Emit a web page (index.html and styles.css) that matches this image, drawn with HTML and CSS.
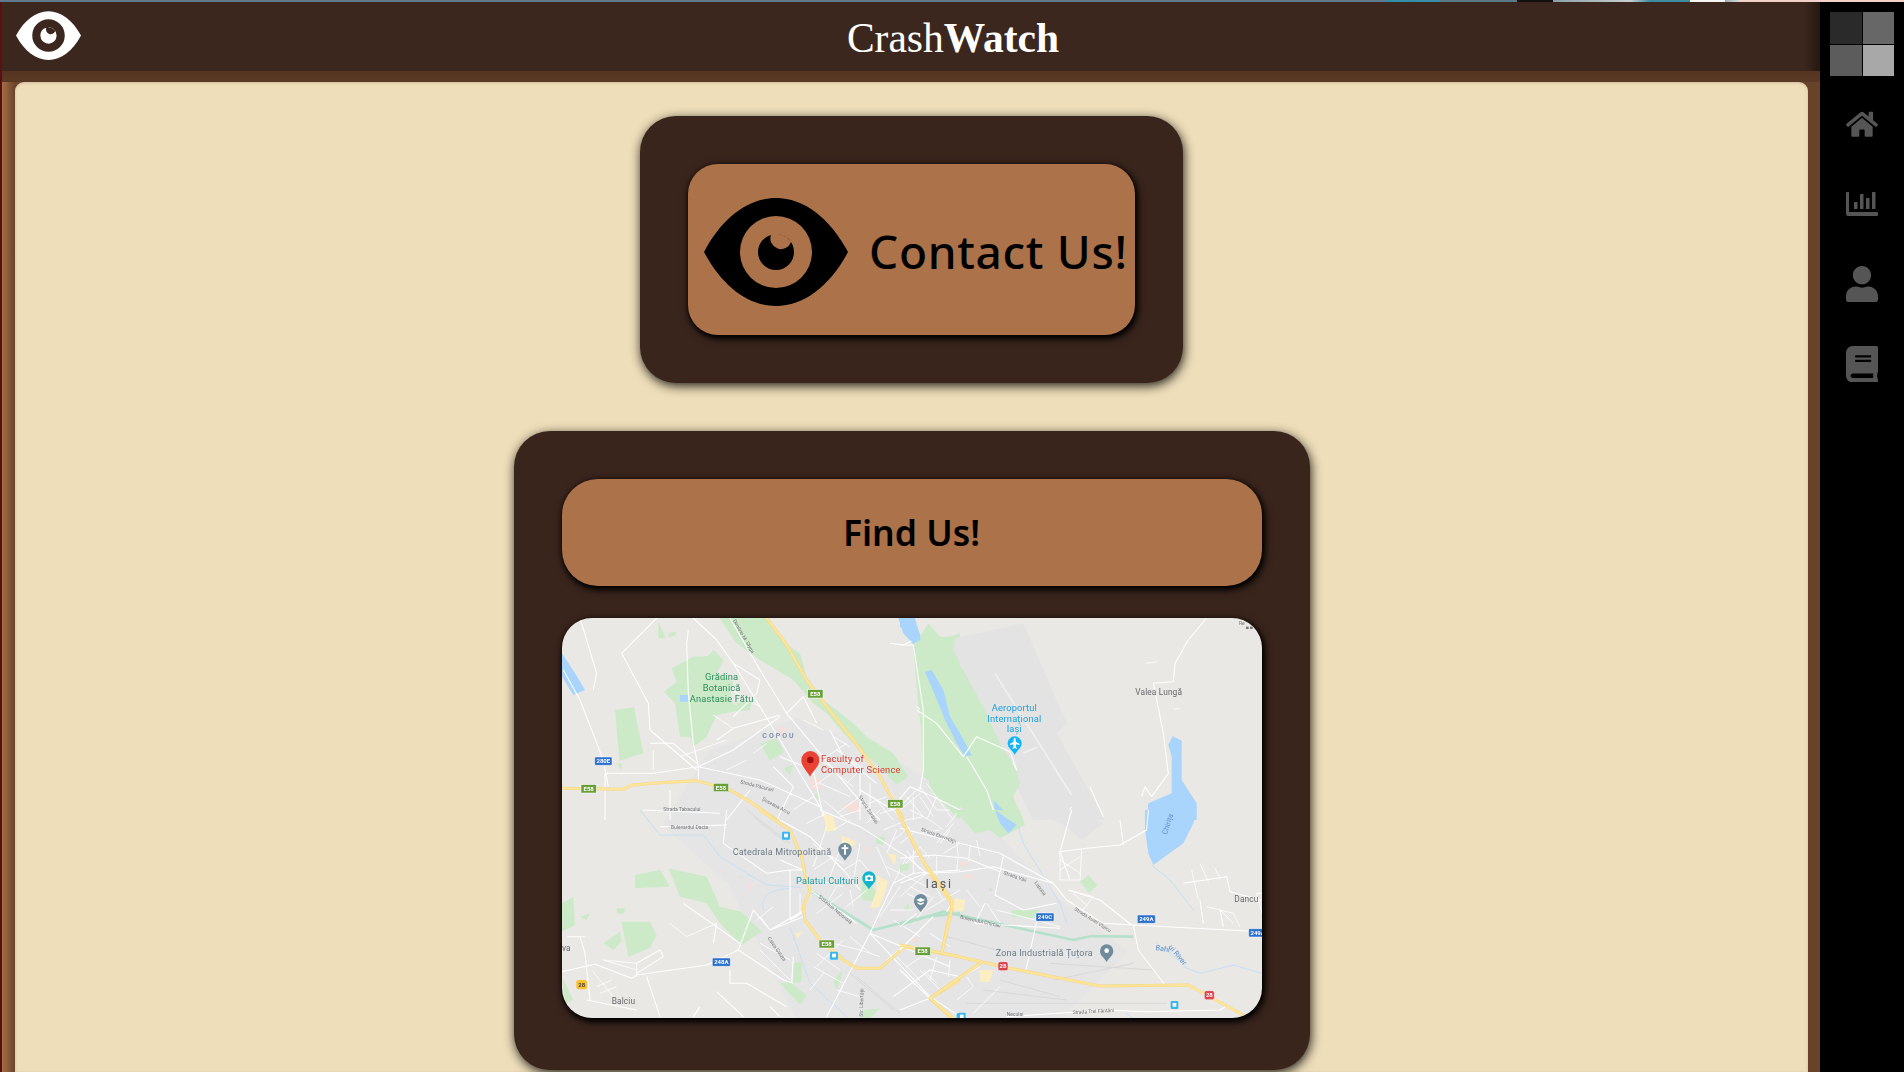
FILE: index.html
```html
<!DOCTYPE html>
<html lang="en">
<head>
<meta charset="utf-8">
<title>CrashWatch</title>
<link rel="stylesheet" href="styles.css">
</head>
<body>
<div class="strip"></div>
<div class="frame">
  <div class="redline"></div>
  <div class="page">
    <header class="topbar">
      <svg class="logo" viewBox="0 0 144 108"><use href="#eye"/></svg>
      <h1 class="brand">Crash<b>Watch</b></h1>
      <span></span>
    </header>
    <main class="main">
      <div class="panel">
        <section class="card card-contact">
          <a class="btn btn-contact">
            <svg class="btn-eye" viewBox="0 0 144 108"><use href="#eye"/></svg>
            <span>Contact Us!</span>
          </a>
        </section>
        <section class="card card-find">
          <a class="btn btn-find">Find Us!</a>
          <div class="map">
            <svg class="map-svg" viewBox="0 0 2100 1200" xmlns="http://www.w3.org/2000/svg">
              <rect class="land" width="2100" height="1200"/>
              <!-- city tint -->
              <path class="city" d="M440 400L700 300 1000 420 1300 640 1500 850 1700 1000 1500 1200 700 1200 500 800 300 620Z"/>
              <!-- top left crop -->
              <g transform="translate(-6,-24)">
                <path class="green" d="M335 175L400 140 445 138 460 120 490 150 470 190 520 215 510 270 545 300 470 315 440 380 400 410 390 380 360 380 345 280 312 245 350 215Z"/>
                <path class="green" d="M165 300L222 292 250 430 178 452Z"/>
                <path class="green" d="M295 35L318 85 295 85Z M325 70L350 65 345 78 325 80Z M170 460L185 460 185 480Z"/>
                <path class="green" d="M478 24L620 24 690 110 720 130 740 200 790 270 830 300 880 340 920 380 1000 430 1045 500 1010 525 960 470 900 420 850 370 800 310 760 280 700 210 600 150 530 100Z"/>
                <path class="green" d="M1060 110L1140 90 1200 70 1200 630 1110 540 1090 400 1075 290Z"/>
                <path class="green" d="M600 400L650 385 672 425 630 452Z M530 280L575 270 570 300 535 305Z M670 475L700 465 690 495Z M760 560L780 540 780 570Z"/>
                <path class="pinkish" d="M745 505L775 505 785 535 755 540Z M850 590L885 570 905 595 880 615Z M650 350L680 355 670 380Z"/>
                <path class="water" d="M6 130L45 190 75 240 40 255 6 200Z M1015 24L1060 24 1085 85 1060 103 1030 70Z M1095 180L1115 180 1130 240 1165 290 1170 330 1200 380 1200 400 1160 340 1120 270Z M360 255L385 255 385 275 360 275Z"/>
                <path class="road" d="M400 24L470 90 520 160 600 290 660 390 780 590 800 630M510 24L600 180 680 310 780 430 880 550 960 630M60 24L110 190 100 240M10 180L60 270 130 450 145 530M290 24L185 130 265 280 270 360 410 480M385 60L380 100 385 250 400 400 415 470M140 490L280 490 415 470 600 510 780 590M415 470L520 420 660 320M500 630L570 540M470 390L520 355 660 315M415 470L415 510M270 400L340 400 410 460M135 490L135 630M250 600L480 610M330 540L330 630M600 290L500 230M520 160L600 210 590 250 520 320M680 310L730 260 770 340M810 360L850 440 950 520M660 440L760 480 790 620M640 470L700 530 650 630M990 100L1030 105 1060 90M830 420L900 470 900 630M1000 590L1050 530 1120 560 1200 600M900 540L1000 600M1070 290L1150 350 1200 430"/>
                <path class="road thin" d="M750 430L830 480 760 530M780 520L870 560M790 570L860 630M930 520L930 630M960 500L1000 560M860 520L900 480M700 600L760 560M1060 560L1060 630M1100 520L1180 630M500 480L560 450M280 420L280 480M580 430L620 400M730 330L790 360M360 440L500 390M460 315L520 355M820 380L870 410M900 590L980 560M940 560L1000 630M1040 560L1090 620M800 440L860 400M840 500L880 530M830 610L900 560M1010 610L1080 550M1130 560L1100 630M960 610L1030 590"/>
                <path class="hwy-b" d="M6 535L190 538 215 525 300 518 410 512 510 540 570 575 650 630M620 24L680 105 740 210 800 290 880 390 960 500 1010 590 1030 630"/>
                <path class="hwy" d="M6 535L190 538 215 525 300 518 410 512 510 540 570 575 650 630M620 24L680 105 740 210 800 290 880 390 960 500 1010 590 1030 630"/>
              </g>
              <!-- top right crop -->
              <g transform="translate(1014,-24)">
                <path class="airport" d="M165 85L370 40 500 340 470 370 560 530 615 630 400 630 340 510 280 350 160 120Z"/>
                <path class="green" d="M40 110L85 40 120 80 165 80 155 120 190 180 250 290 300 400 345 470 360 520 340 560 370 630 230 630 120 540 70 500 60 300Z"/>
                <path class="runway" d="M285 190L515 555M370 430L410 412"/>
                <path class="water" d="M0 24L45 24 62 90 38 100 15 60 0 50Z M75 185L95 180 130 240 150 320 180 370 215 435 195 440 170 400 135 330 115 280Z M280 570L330 620 340 630 290 630Z M818 378L845 392 845 510 890 580 890 630 740 630 745 580 815 550 815 440 805 405Z"/>
                <path class="road" d="M920 24L865 90 825 160 820 215 760 220 790 370 805 490 755 560 735 530 725 560M50 300L110 340 190 440 230 380 330 425 350 480 340 460M40 105L70 300 70 480 60 540M200 440L260 540 290 630M570 530L610 620M515 590L490 630M40 105L0 105"/>
                <path class="road thin" d="M770 155L740 160M820 298L840 296M0 590L60 530 110 600 150 600M60 560L100 620M30 600L90 630"/>
              </g>
              <!-- bottom left crop -->
              <g transform="translate(-6,576)">
                <path class="green" d="M225 195L300 180 330 230 225 235Z"/>
                <path class="green" d="M325 175L440 200 480 290 545 305 605 365 545 405 480 340 440 280 360 260Z"/>
                <path class="green" d="M185 335L270 335 290 375 270 415 205 440 195 390Z M130 400L180 365 185 395 160 420Z M6 280L40 260 45 345 6 365Z M170 295L195 295 190 312 170 310Z M6 500L40 570 15 580Z M60 320L90 310 80 330Z M700 460L725 455 725 515 700 520Z M660 520L690 515 740 555 720 585Z M910 600L960 595 930 625 905 625Z M905 195L945 240 960 275 905 270Z M820 510L850 480 830 545Z M950 80L975 80 970 105 948 100Z M1030 300L1045 280 1050 300Z"/>
                <path class="sand" d="M790 10L820 20 830 60 800 65Z M840 75L890 95 860 130Z M980 130L1010 135 1005 165Z M950 195L985 215 960 290 930 295 950 240Z M705 370L725 365 715 385Z"/>
                <path class="pinkish" d="M915 110L930 110 925 140Z M560 225L580 220 570 250Z M1060 390L1075 380 1070 400Z"/>
                <path class="canal-blue" d="M240 0L300 75 430 75 480 140 620 225 720 232M610 300C600 250 640 240 690 235M690 350L750 520 860 620M545 195L545 205M565 195L585 205"/>
                <path class="canal" d="M745 238L940 360 1100 320 1200 310"/>
                <path class="rail" d="M560 0L690 100M580 20L680 100M870 490L1000 600M890 500L1020 610"/>
                <path class="road" d="M6 485L105 463 215 505 230 495 440 465 535 420 670 510 700 520M500 0L490 100 620 190 690 180 730 180M690 180L690 330 725 310M535 420L580 300 630 360 725 305M730 320L630 360M540 400L370 280M470 340L460 400M630 360L600 320M695 520L700 440M930 370L800 620M930 370L1110 560 1200 620M930 370L1000 220 1060 190 1200 180M930 370L1170 470M750 240L890 340M780 0L900 50 1040 140 1100 190M660 30L750 80 850 180 900 240M500 45L300 50M230 460L300 420 310 440 230 490M80 570L230 600M60 380L75 430 90 570M260 500L300 620M510 480L510 520 560 520 680 590M470 545L550 620M400 620L420 590M630 590L660 620M660 150L730 180M1000 560L1110 480 1200 500"/>
                <path class="road thin" d="M800 50L760 170M850 90L810 200M900 100L880 210M950 110L990 200M1010 60L980 130M1040 140L1000 220M1100 190L1020 260M1060 190L1060 120M980 170L1100 230M780 120L850 160M760 180L820 140M850 180L900 150M870 240L880 290M780 260L880 330M770 310L850 250M760 470L850 520M790 490L750 540M770 430L840 480M850 390L770 470M590 330L640 290M720 250L720 310M600 400L690 450M600 420L690 510M20 380L75 380M130 450L230 480M230 460L230 500M95 480L160 560M110 530L155 510M120 550L170 530M230 460L130 450M330 340L380 380 470 340M980 450L1050 390M1010 440L1080 510M1090 480L1130 520M1100 300L1200 240M1120 220L1160 260M740 40L800 10M840 20L900 0M920 40L960 0M970 60L1040 30M1050 60L1000 0M1080 70L1140 60M1130 100L1180 40M1150 130L1200 100M820 60L870 30M760 100L790 130M900 150L940 200M1000 90L1050 50M1030 170L1080 110M770 210L850 230M800 280L830 230M860 290L920 240M960 320L1020 230M1040 250L1100 280M1120 260L1060 340M990 300L1060 300M820 400L900 420M900 420L960 440M870 380L930 430M1000 330L1080 380M1110 370L1170 410M830 540L900 560M1040 470L1100 430M1130 440L1110 510"/>
                <path class="hwy-b" d="M600 0L690 60 725 140 735 195 750 240 730 290 735 330 780 390 850 450 890 475 960 475 1035 410 1200 440M1010 0L1060 100 1110 190 1175 280 1145 430M1200 510L1110 565 1175 625"/>
                <path class="hwy" d="M600 0L690 60 725 140 735 195 750 240 730 290 735 330 780 390 850 450 890 475 960 475 1035 410 1200 440M1010 0L1060 100 1110 190 1175 280 1145 430M1200 510L1110 565 1175 625"/>
              </g>
              <!-- bottom right crop -->
              <g transform="translate(1014,576)">
                <path class="airport" d="M400 0L520 0 610 40 545 90 500 50Z"/>
                <path class="green" d="M165 0L360 0 375 45 300 85 270 60 225 70Z M335 300L420 300 400 325 335 320Z M540 215L565 195 592 225 568 250Z M0 165L30 160 25 180 0 185Z M265 230L280 240 270 245Z"/>
                <path class="water" d="M735 0L890 0 880 40 850 100 760 165 745 130 735 60Z M285 0L350 45 325 70 300 40Z"/>
                <path class="canal-blue" d="M355 50L370 100 480 280 500 340M755 165L810 210 880 300M850 470L900 490 1000 465 1086 490M680 610L700 625M770 400L860 470"/>
                <path class="canal" d="M0 345L130 305 520 390 575 378 700 380"/>
                <path class="rail" d="M140 380L290 420M450 460L760 480M200 580L800 580M250 540L500 570M300 510L480 560M460 510L700 460"/>
                <path class="sand" d="M165 265L195 270 190 305 160 300Z M238 480L280 480 270 515 240 515Z"/>
                <path class="pinkish" d="M175 155L205 155 190 175Z M185 195L220 195 215 210Z M35 385L55 380 45 400Z"/>
                <path class="road" d="M0 55L60 70 180 100 300 130 460 220 500 270 610 340 700 345 1086 365M0 220L80 190 180 185 280 170 460 220M0 145L100 135 200 145 300 185M310 140L285 255 370 300 470 280M700 345L715 420 795 525M410 335L378 480M695 345L600 270 505 240M670 105L660 30M480 125L560 115 660 105 740 60 745 0M515 0L480 125 510 210M850 220L980 200 990 245 1086 270M900 270L910 340M960 300L970 350M1070 250L1086 250M320 620L620 600 740 605 960 600 985 585M100 320L0 420M255 280L225 340 480 355M140 305L155 280M0 480L90 565 0 600M0 350L50 310"/>
                <path class="road thin" d="M480 125L480 210 540 210 545 120M480 150L540 190M480 180L540 140M505 240L580 260 540 310M520 250L565 290M875 180L895 270M900 160L925 215M945 175L960 205M920 290L1000 310 1020 350M960 300L1000 340M1070 250L1086 310M290 300L480 350M260 280L300 340M170 100L175 140 170 180M210 110L205 155M40 70L0 100M110 140L110 195M20 120L60 180M60 480L120 540M170 570L220 530 200 500M150 520L240 470M150 450L145 500M220 610L300 530M20 30L70 20M90 30L130 60M140 50L170 10M230 90L240 140M120 100L150 60M30 230L90 260M100 220L130 270M200 240L240 290M60 110L90 145"/>
                <path class="hwy-b" d="M0 405L130 430 330 475 600 528 865 525 920 555 1030 615M155 270L155 300 125 430M240 460L90 565 160 625M0 20L70 155 155 270"/>
                <path class="hwy" d="M0 405L130 430 330 475 600 528 865 525 920 555 1030 615M155 270L155 300 125 430M240 460L90 565 160 625M0 20L70 155 155 270"/>
              </g>

              <!-- labels: top left -->
              <g transform="translate(-6,-24)">
                <text class="l-green" x="485" y="210">Grădina</text>
                <text class="l-green" x="485" y="243">Botanică</text>
                <text class="l-green" x="485" y="275">Anastasie Fătu</text>
                <text class="l-area" x="657" y="384">COPOU</text>
                <text class="l-red" x="783" y="455">Faculty of</text>
                <text class="l-red" x="783" y="488">Computer Science</text>
                <text class="l-st" x="310" y="602">Strada Tabacului</text>
                <text class="l-st" transform="translate(540,520) rotate(14)">Strada Păcurari</text>
                <text class="l-st" transform="translate(605,570) rotate(28)">Șoseaua Arcu</text>
                <text class="l-st" transform="translate(518,32) rotate(60)">Dimitrie M. Sfyga</text>
                <text class="l-st" transform="translate(895,560) rotate(58)">Strada Sărăriei</text>
                <path class="pin-red" d="M750 500C738 478 724 470 724 450A26 26 0 0 1 778 450C778 470 762 478 750 500Z"/>
                <circle class="pin-dot" cx="751" cy="450" r="10"/>
                <g class="sh-green"><rect x="743" y="239" width="46" height="25"/><text x="766" y="258">E58</text></g>
                <g class="sh-green"><rect x="63" y="524" width="46" height="25"/><text x="86" y="543">E58</text></g>
                <g class="sh-green"><rect x="460" y="520" width="46" height="25"/><text x="483" y="539">E58</text></g>
                <g class="sh-green"><rect x="983" y="569" width="46" height="25"/><text x="1006" y="588">E58</text></g>
                <g class="sh-blue"><rect x="104" y="441" width="52" height="25" rx="3"/><text x="130" y="460">280E</text></g>
              </g>
              <!-- labels: top right -->
              <g transform="translate(1014,-24)">
                <text class="l-sky" x="343" y="303">Aeroportul</text>
                <text class="l-sky" x="343" y="335">Internațional</text>
                <text class="l-sky" x="343" y="367">Iași</text>
                <path class="pin-sky" d="M344 434C335 418 323 414 323 400A21 21 0 0 1 365 400C365 414 353 418 344 434Z"/>
                <path class="plane" d="M342 384H346L348 396 358 401V405L348 403 347 411 351 414V416L344 414 337 416V414L341 411 340 403 330 405V401L340 396Z"/>
                <text class="l-town mid" x="776" y="254">Valea Lungă</text>
                <text class="l-st" x="1017" y="46">Re</text>
                <rect class="dots" x="1038" y="50" width="8" height="7"/><rect class="dots" x="1050" y="50" width="8" height="7"/>
              </g>
              <!-- labels: bottom left -->
              <g transform="translate(-6,576)">
                <text class="l-st" x="333" y="58">Bulevardul Dacia</text>
                <text class="l-st" transform="translate(622,385) rotate(55)">Calea Galata</text>
                <text class="l-st" transform="translate(775,262) rotate(40)">Șoseaua Națională</text>
                <text class="l-st" transform="translate(908,620) rotate(-88)">Str. Libertății</text>
                <text class="l-poi" x="518" y="135">Catedrala Mitropolitană</text>
                <path class="pin-gray" d="M855 152C846 138 835 132 835 118A20 20 0 0 1 875 118C875 132 864 138 855 152Z"/>
                <path class="pin-glyph" d="M852 104H858V112H865V117H858V134H852V117H845V112H852Z"/>
                <text class="l-teal" x="802" y="221">Palatul Culturii</text>
                <path class="pin-teal" d="M927 238C917 222 907 218 907 204A20 20 0 0 1 947 204C947 218 937 222 927 238Z"/>
                <path class="pin-glyph" d="M915 197H922L924 194H930L932 197H939V213H915Z"/>
                <circle class="pin-teal" cx="927" cy="205" r="5"/>
                <text class="l-city" x="1138" y="235">Iași</text>
                <path class="pin-gray" d="M1082 306C1073 292 1062 286 1062 272A20 20 0 0 1 1102 272C1102 286 1091 292 1082 306Z"/>
                <path class="pin-glyph" d="M1068 270L1082 264 1096 270 1082 276ZM1073 276L1082 280 1091 276V281L1082 285 1073 281Z"/>
                <text class="l-town" x="155" y="582">Balciu</text>
                <text class="l-town" x="6" y="422">va</text>
                <g class="sh-green"><rect x="777" y="390" width="46" height="24"/><text x="800" y="408">E58</text></g>
                <g class="sh-green"><rect x="1065" y="410" width="46" height="25"/><text x="1088" y="429">E58</text></g>
                <g class="sh-blue"><rect x="457" y="444" width="54" height="25" rx="3"/><text x="484" y="463">248A</text></g>
                <g class="sh-yellow"><rect x="49" y="510" width="32" height="28" rx="7"/><text x="65" y="531">28</text></g>
                <g class="sh-transit"><rect x="666" y="65" width="24" height="24" rx="3"/><rect class="ti" x="672" y="71" width="12" height="11"/></g>
                <g class="sh-transit"><rect x="810" y="425" width="24" height="24" rx="3"/><rect class="ti" x="816" y="431" width="12" height="11"/></g>
                <g class="sh-transit"><rect x="1190" y="610" width="24" height="24" rx="3"/></g>
              </g>
              <!-- labels: bottom right -->
              <g transform="translate(1014,576)">
                <text class="l-st" transform="translate(62,62) rotate(20)">Strada Eternității</text>
                <text class="l-st" transform="translate(310,192) rotate(20)">Strada Văii</text>
                <text class="l-st" transform="translate(403,218) rotate(55)">Lupului</text>
                <text class="l-st" transform="translate(522,300) rotate(32)">Strada Aurel Vlaicu</text>
                <text class="l-st" transform="translate(180,325) rotate(13)">Bulevardul Chimiei</text>
                <text class="l-st" transform="rotate(-3 518 612) translate(518,612)">Strada Trei Fântâni</text>
                <text class="l-st" x="320" y="619">Neculai</text>
                <text class="l-poi" x="287" y="439">Zona Industrială Țuțora</text>
                <path class="pin-gray" d="M620 456C611 441 600 437 600 423A20 20 0 0 1 640 423C640 437 629 441 620 456Z"/>
                <circle class="pin-glyph" cx="620" cy="422" r="7"/>
                <text class="l-town" x="1003" y="276">Dancu</text>
                <text class="l-river" transform="translate(766,420) rotate(8)">Bahl</text>
                <text class="l-river" transform="translate(805,412) rotate(50)">ui River</text>
                <text class="l-river" transform="translate(800,75) rotate(-72)">Chirița</text>
                <g class="sh-blue"><rect x="408" y="309" width="54" height="25" rx="3"/><text x="435" y="328">249C</text></g>
                <g class="sh-blue"><rect x="712" y="315" width="54" height="25" rx="3"/><text x="739" y="334">249A</text></g>
                <g class="sh-blue"><rect x="1046" y="356" width="54" height="25" rx="3"/><text x="1073" y="375">249A</text></g>
                <g class="sh-green"><rect x="45" y="411" width="46" height="25"/><text x="68" y="430">E58</text></g>
                <g class="sh-red"><rect x="294" y="455" width="30" height="27" rx="6"/><text x="309" y="475">28</text></g>
                <g class="sh-red"><rect x="913" y="542" width="30" height="27" rx="6"/><text x="928" y="562">28</text></g>
                <g class="sh-transit"><rect x="812" y="573" width="23" height="24" rx="3"/><rect class="ti" x="818" y="579" width="11" height="11"/></g>
                <g class="sh-transit"><rect x="174" y="608" width="23" height="24" rx="3"/><rect class="ti" x="180" y="614" width="11" height="11"/></g>
              </g>
            </svg>
          </div>
        </section>
      </div>
    </main>
  </div>
</div>
<aside class="sidebar">
  <div class="swatch"><i class="s1"></i><i class="s2"></i><i class="s3"></i><i class="s4"></i></div>
  <nav class="nav">
    <a class="nav-item"><svg class="ico" viewBox="0 0 576 512"><path d="M280.37 148.26L96 300.11V464a16 16 0 0 0 16 16l112.06-.29a16 16 0 0 0 15.92-16V368a16 16 0 0 1 16-16h64a16 16 0 0 1 16 16v95.64a16 16 0 0 0 16 16.05L464 480a16 16 0 0 0 16-16V300L295.67 148.26a12.19 12.19 0 0 0-15.3 0zM571.6 251.47L488 182.56V44.05a12 12 0 0 0-12-12h-56a12 12 0 0 0-12 12v72.61L318.47 43a48 48 0 0 0-61 0L4.34 251.47a12 12 0 0 0-1.6 16.9l25.5 31A12 12 0 0 0 45.15 301l235.22-193.74a12.19 12.19 0 0 1 15.3 0L530.9 301a12 12 0 0 0 16.9-1.6l25.5-31a12 12 0 0 0-1.7-16.93z"/></svg></a>
    <a class="nav-item"><svg class="ico" viewBox="0 0 32 24"><path d="M1 0H3V20H31A1 1 0 0 1 32 21V23A1 1 0 0 1 31 24H2A2 2 0 0 1 0 22V1A1 1 0 0 1 1 0Z"/><rect x="8" y="10" width="3.5" height="7" rx=".5"/><rect x="14" y="2" width="3.5" height="15" rx=".5"/><rect x="20" y="6" width="3.5" height="11" rx=".5"/><rect x="26" y="0" width="3.5" height="17" rx=".5"/></svg></a>
    <a class="nav-item"><svg class="ico" viewBox="0 0 448 512"><path d="M224 256c70.7 0 128-57.3 128-128S294.7 0 224 0 96 57.3 96 128s57.3 128 128 128zm89.6 32h-16.7c-22.2 10.2-46.9 16-72.9 16s-50.6-5.8-72.9-16h-16.7C60.2 288 0 348.2 0 422.4V464c0 26.5 21.5 48 48 48h352c26.5 0 48-21.5 48-48v-41.6c0-74.2-60.2-134.4-134.4-134.4z"/></svg></a>
    <a class="nav-item"><svg class="ico" viewBox="0 0 448 512"><path d="M448 360V24c0-13.3-10.7-24-24-24H96C43 0 0 43 0 96v320c0 53 43 96 96 96h328c13.3 0 24-10.7 24-24v-16c0-7.5-3.5-14.3-8.9-18.7-4.2-15.4-4.2-59.3 0-74.7 5.4-4.3 8.9-11.1 8.9-18.6zM128 134c0-3.3 2.7-6 6-6h212c3.3 0 6 2.7 6 6v20c0 3.3-2.7 6-6 6H134c-3.3 0-6-2.7-6-6v-20zm0 64c0-3.3 2.7-6 6-6h212c3.3 0 6 2.7 6 6v20c0 3.3-2.7 6-6 6H134c-3.3 0-6-2.7-6-6v-20zm253.4 250H96c-17.7 0-32-14.3-32-32 0-17.6 14.4-32 32-32h285.4c-1.9 17.1-1.9 46.9 0 64z"/></svg></a>
  </nav>
</aside>
<svg class="defs" width="0" height="0"><defs><path id="eye" fill-rule="evenodd" d="M0 54C18 20 44 0 72 0S126 20 144 54C126 88 100 108 72 108S18 88 0 54ZM72 18A36 36 0 1 0 72 90 36 36 0 1 0 72 18ZM72 36A18 18 0 1 1 54 54 18 18 0 0 1 67 37 9 9 0 1 0 87 44 18 18 0 0 0 72 36Z"/></defs></svg>
</body>
</html>
```
FILE: styles.css
```css
* { box-sizing: border-box; }
html, body { margin: 0; height: 100%; }
body {
  display: flex;
  flex-direction: column;
  overflow: hidden;
  background: #3c271f;
  font-family: "Noto Sans", sans-serif;
}
.defs { position: absolute; }
.strip {
  height: 2px;
  flex: none;
  background: linear-gradient(90deg, #5f7a8c 0, #5f7a8c 1385px, #2f8fa5 1385px, #3a8ea8 1440px, #5a7a88 1440px, #5a7a88 1517px, #111 1517px, #111 1553px, #8aa0a8 1553px, #c8d0d0 1630px, #3d8ca0 1650px, #3d8ca0 1690px, #f4f4f4 1690px, #f4f4f4 1725px, #9aa8b0 1725px, #d8dde0 1740px, #f2d2c8 1740px, #f2d2c8 1904px);
}
.frame { flex: 1; min-height: 0; display: flex; }
.redline { width: 2px; flex: none; background: #5a1010; }
.page { flex: 1; min-width: 0; display: flex; flex-direction: column; }

.topbar {
  height: 69px;
  flex: none;
  display: grid;
  grid-template-columns: 1fr auto 1fr;
  align-items: center;
  background: linear-gradient(90deg, #3c271f calc(100% - 100px), #26170f calc(100% - 84px));
}
.logo { width: 65px; height: 49px; fill: #fff; display: block; margin: -2px 0 0 14px; }
.brand {
  margin: 0;
  color: #fff;
  font: 400 41.5px/1 "Liberation Serif", serif;
  padding-top: 4px;
}
.brand b { font-weight: 700; }

.main {
  flex: 1;
  min-height: 0;
  display: flex;
  padding: 11px 96px 0 13px;
  background:
    linear-gradient(180deg, #553522 0, #5a3924 11px, transparent 11px),
    linear-gradient(90deg, #a56e45 0, #6a442a 13px, #694329 100%);
}
.panel {
  flex: 1;
  min-width: 0;
  display: flex;
  flex-direction: column;
  align-items: center;
  gap: 48px;
  padding-top: 34px;
  overflow: hidden;
  background: #eedeb9;
  border-radius: 9px 9px 0 0;
  box-shadow: inset 0 1px 3px rgba(90, 60, 30, .2);
}
.card {
  flex: none;
  padding: 48px;
  background: #3a251d;
  border-radius: 36px;
  box-shadow: 1px 3px 11px rgba(0, 0, 0, .85);
}
.card-contact { width: 543px; height: 267px; }
.card-find { width: 796px; height: 639px; display: flex; flex-direction: column; gap: 32px; }
.btn {
  display: flex;
  align-items: center;
  justify-content: center;
  color: #000;
  background: #ac7249;
  box-shadow: 2px 3px 10px #000, 1px 2px 5px #000;
}
.btn-contact {
  height: 171px;
  justify-content: flex-start;
  gap: 21px;
  padding: 3px 0 0 16px;
  border-radius: 30px;
  font-size: 46px;
  font-weight: 500;
  letter-spacing: .7px;
  white-space: nowrap;
}
.btn-eye { width: 144px; height: 108px; fill: #000; flex: none; margin-top: 1px; }
.btn-find {
  height: 107px;
  padding-bottom: 2px;
  border-radius: 36px;
  font-size: 35.5px;
  font-weight: 600;
}
.map {
  height: 400px;
  border-radius: 30px;
  overflow: hidden;
  box-shadow: 2px 3px 10px #000, 1px 2px 5px #000;
}
.map-svg { display: block; width: 700px; height: 400px; filter: blur(.45px); }

/* map fills */
.land { fill: #e9e8e5; }
.city { fill: #e5e5e5; }
.green { fill: #cdeac8; }
.water { fill: #a9d4fb; }
.airport { fill: #e3e3e4; }
.sand { fill: #fbeec2; }
.pinkish { fill: #f5dfdb; }
.runway { fill: none; stroke: #f0f0f0; stroke-width: 5; }
.rail { fill: none; stroke: #d8d8da; stroke-width: 3; }
.road { fill: none; stroke: #fff; stroke-width: 3.2; stroke-linejoin: round; }
.thin { stroke-width: 2.4; }
.hwy-b { fill: none; stroke: #f6d77f; stroke-width: 9; stroke-linejoin: round; }
.hwy { fill: none; stroke: #fee59b; stroke-width: 6; stroke-linejoin: round; }
.canal { fill: none; stroke: #b4e0cc; stroke-width: 8; }
.canal-blue { fill: none; stroke: #c6e0f4; stroke-width: 3; }

/* map labels */
.map-svg text { font-family: Roboto, sans-serif; }
.l-green { fill: #2c8f5d; font-size: 28px; text-anchor: middle; letter-spacing: .4px; }
.l-area { fill: #7384a4; font-size: 21px; text-anchor: middle; letter-spacing: 6px; font-weight: 500; }
.l-red { fill: #d9392d; font-size: 28px; letter-spacing: .7px; }
.l-sky { fill: #1ba1e2; font-size: 28px; text-anchor: middle; letter-spacing: .4px; }
.l-town { fill: #66676c; font-size: 25px; letter-spacing: .4px; }
.mid { text-anchor: middle; }
.l-st { fill: #74777b; font-size: 15px; }
.l-poi { fill: #6a7b86; font-size: 27px; letter-spacing: .6px; }
.l-teal { fill: #1e9aa3; font-size: 27.5px; text-anchor: middle; letter-spacing: .6px; }
.l-city { fill: #55565b; font-size: 37px; text-anchor: middle; letter-spacing: 6px; }
.l-river { fill: #5d90cd; font-size: 22px; }
.pin-red { fill: #ea4335; }
.pin-dot { fill: #a50e0e; }
.pin-sky { fill: #12b5f5; }
.plane { fill: #fff; }
.pin-gray { fill: #6f8b9c; }
.pin-teal { fill: #12b5cb; }
.pin-glyph { fill: #fff; }
.dots { fill: #777; }
.sh-green rect { fill: #689f38; stroke: #fff; stroke-width: 1.5; }
.sh-blue rect { fill: #2a6fcb; stroke: #fff; stroke-width: 1.5; }
.sh-yellow rect { fill: #fbc02d; }
.sh-red rect { fill: #d9434d; stroke: #fff; stroke-width: 1.5; }
.sh-transit rect { fill: #38b8f2; }
.sh-transit .ti { fill: #fff; }
.sh-green text, .sh-blue text, .sh-red text { fill: #fff; font-size: 18px; font-weight: 700; text-anchor: middle; }
.sh-yellow text { fill: #444; font-size: 18px; font-weight: 700; text-anchor: middle; }

/* side rail */
.sidebar {
  position: fixed;
  top: 2px;
  right: 0;
  bottom: 0;
  width: 84px;
  padding: 10px 10px 0;
  background: #000;
}
.swatch {
  width: 64px;
  height: 64px;
  display: grid;
  grid-template-columns: 1fr 1fr;
  gap: 1px;
}
.swatch i { display: block; }
.s1 { background: #2a2a2a; }
.s2 { background: #676767; }
.s3 { background: #5c5c5c; }
.s4 { background: #a8a8a8; }
.nav { display: flex; flex-direction: column; margin: 8px -10px 0; }
.nav-item { height: 80px; display: flex; align-items: center; justify-content: center; }
.ico { width: 32px; display: block; fill: #555; }
```
